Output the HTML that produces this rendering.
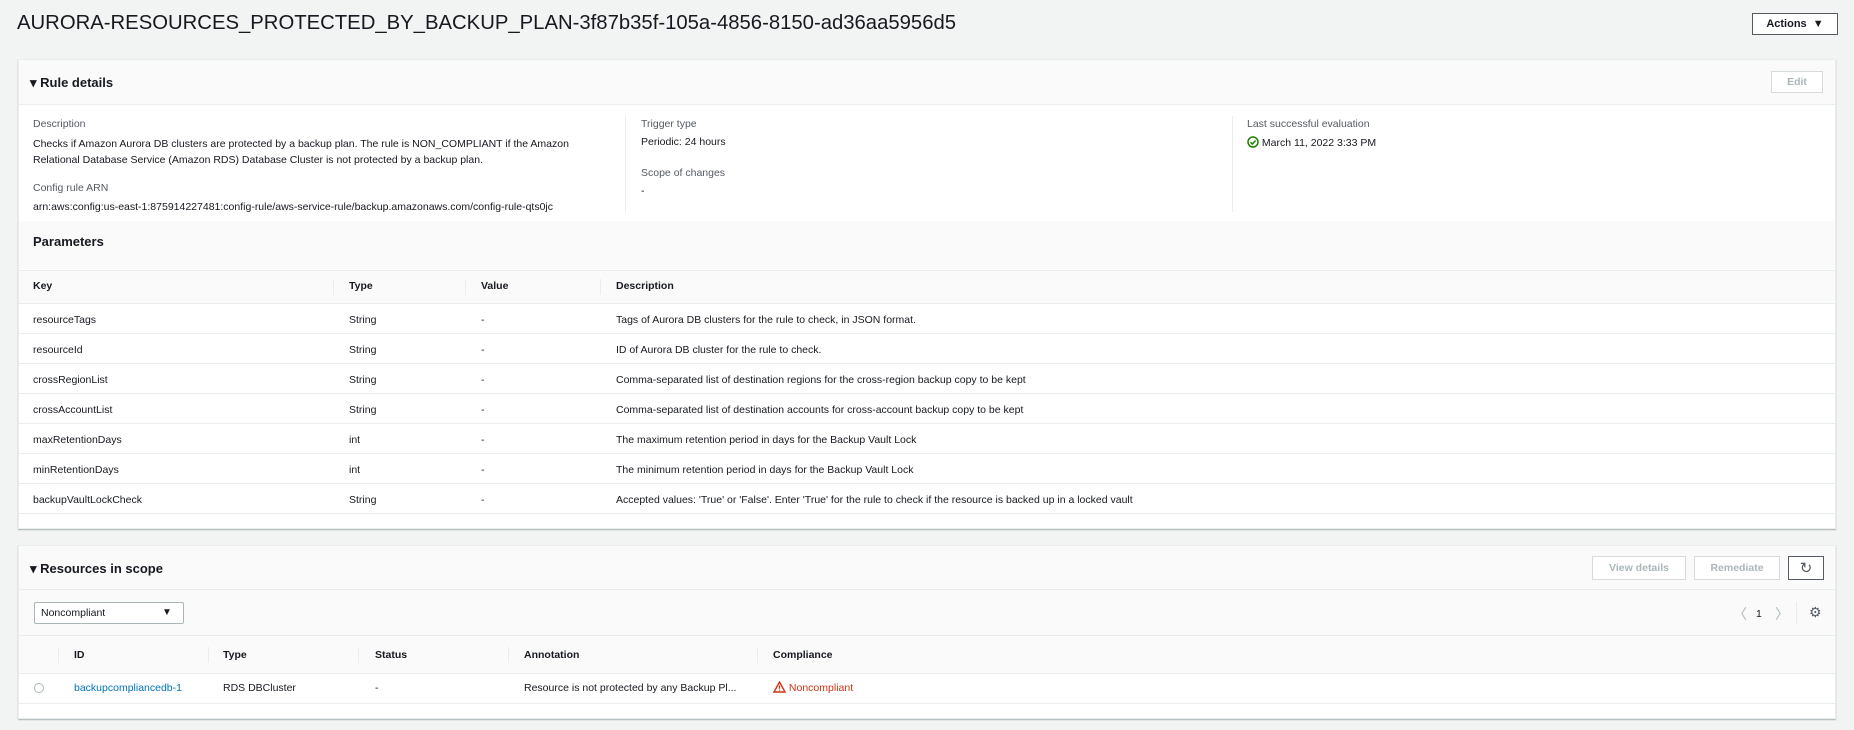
<!DOCTYPE html>
<html><head><meta charset="utf-8"><style>
*{box-sizing:border-box;margin:0;padding:0}
body{width:1854px;height:730px;background:#f2f3f3;font-family:"Liberation Sans",sans-serif;color:#16191f;font-size:12px;position:relative;overflow:hidden}
.a{position:absolute;white-space:nowrap}
.lbl{color:#545b64}
.box{position:absolute;left:18px;width:1818px;background:#fff;border:1px solid #eaeded;box-shadow:0 1px 1px rgba(0,28,36,.3)}
.hdr{position:absolute;left:0;right:0;background:#fafafa;border-bottom:1px solid #eaeded}
.btn{position:absolute;border:1px solid #d5dbdb;background:#fff;color:#aab7b8;font-weight:bold;font-size:12px;display:flex;align-items:center;justify-content:center}
.line{position:absolute;height:1px;background:#eaeded}
.vl{position:absolute;width:1px;background:#eaeded}
.t{font-size:10.5px}
</style></head><body>
<div class="a" style="left:17px;top:12px;font-size:20.3px;color:#16191f">AURORA-RESOURCES_PROTECTED_BY_BACKUP_PLAN-3f87b35f-105a-4856-8150-ad36aa5956d5</div>
<div class="btn" style="left:1752px;top:13px;width:86px;height:22px;border-color:#545b64;color:#16191f;font-size:11px">Actions&nbsp;&nbsp;▼</div>

<div class="box" style="top:59px;height:470px">
  <div class="hdr" style="top:0;height:45px"></div>
  <div class="a" style="left:11px;top:15px;font-size:13px;font-weight:bold">▾ Rule details</div>
  <div class="btn" style="left:1752px;top:11px;width:52px;height:22px;font-size:10.5px">Edit</div>
  <div class="a lbl t" style="left:14px;top:58px">Description</div>
  <div class="a t" style="left:14px;top:76px;line-height:16px">Checks if Amazon Aurora DB clusters are protected by a backup plan. The rule is NON_COMPLIANT if the Amazon<br>Relational Database Service (Amazon RDS) Database Cluster is not protected by a backup plan.</div>
  <div class="a lbl t" style="left:14px;top:122px">Config rule ARN</div>
  <div class="a t" style="left:14px;top:141px">arn:aws:config:us-east-1:875914227481:config-rule/aws-service-rule/backup.amazonaws.com/config-rule-qts0jc</div>
  <div class="vl" style="left:606px;top:56px;height:96px"></div>
  <div class="a lbl t" style="left:622px;top:58px">Trigger type</div>
  <div class="a t" style="left:622px;top:76px">Periodic: 24 hours</div>
  <div class="a lbl t" style="left:622px;top:107px">Scope of changes</div>
  <div class="a t" style="left:622px;top:125px">-</div>
  <div class="vl" style="left:1213px;top:56px;height:96px"></div>
  <div class="a lbl t" style="left:1228px;top:58px">Last successful evaluation</div>
  <div class="a t" style="left:1228px;top:76px"><svg width="12" height="12" viewBox="0 0 12 12" style="vertical-align:-2px"><circle cx="6" cy="6" r="5" fill="none" stroke="#1d8102" stroke-width="1.5"/><path d="M3.5 6.2l1.8 1.8 3.3-3.5" fill="none" stroke="#1d8102" stroke-width="1.5"/></svg> March 11, 2022 3:33 PM</div>
  <div class="hdr" style="top:161px;height:48px;border-bottom:none"></div>
  <div class="a" style="left:14px;top:174px;font-size:13px;font-weight:bold">Parameters</div>
  <div class="hdr" style="top:210px;height:34px;border-top:1px solid #eaeded"></div>
  <div class="a t" style="left:14px;top:220px;font-weight:bold">Key</div>
  <div class="a t" style="left:330px;top:220px;font-weight:bold">Type</div>
  <div class="a t" style="left:462px;top:220px;font-weight:bold">Value</div>
  <div class="a t" style="left:597px;top:220px;font-weight:bold">Description</div>
  <div class="vl" style="left:314px;top:219px;height:16px"></div>
  <div class="vl" style="left:446px;top:219px;height:16px"></div>
  <div class="vl" style="left:581px;top:219px;height:16px"></div>
  <div class="a t" style="left:14px;top:245px;line-height:30px">resourceTags<br>resourceId<br>crossRegionList<br>crossAccountList<br>maxRetentionDays<br>minRetentionDays<br>backupVaultLockCheck</div>
  <div class="a t" style="left:330px;top:245px;line-height:30px">String<br>String<br>String<br>String<br>int<br>int<br>String</div>
  <div class="a t" style="left:462px;top:245px;line-height:30px">-<br>-<br>-<br>-<br>-<br>-<br>-</div>
  <div class="a t" style="left:597px;top:245px;line-height:30px">Tags of Aurora DB clusters for the rule to check, in JSON format.<br>ID of Aurora DB cluster for the rule to check.<br>Comma-separated list of destination regions for the cross-region backup copy to be kept<br>Comma-separated list of destination accounts for cross-account backup copy to be kept<br>The maximum retention period in days for the Backup Vault Lock<br>The minimum retention period in days for the Backup Vault Lock<br>Accepted values: 'True' or 'False'. Enter 'True' for the rule to check if the resource is backed up in a locked vault</div>
  <div class="line" style="left:0;right:0;top:273px"></div>
  <div class="line" style="left:0;right:0;top:303px"></div>
  <div class="line" style="left:0;right:0;top:333px"></div>
  <div class="line" style="left:0;right:0;top:363px"></div>
  <div class="line" style="left:0;right:0;top:393px"></div>
  <div class="line" style="left:0;right:0;top:423px"></div>
  <div class="line" style="left:0;right:0;top:453px"></div>
</div>

<div class="box" style="top:545px;height:174px">
  <div class="hdr" style="top:0;height:44px"></div>
  <div class="a" style="left:11px;top:15px;font-size:13px;font-weight:bold">▾ Resources in scope</div>
  <div class="btn" style="left:1573px;top:10px;width:94px;height:24px;font-size:10.5px">View details</div>
  <div class="btn" style="left:1675px;top:10px;width:86px;height:24px;font-size:10.5px">Remediate</div>
  <div class="btn" style="left:1769px;top:10px;width:36px;height:24px;border-color:#545b64;color:#545b64;font-size:15px;font-weight:normal">↻</div>
  <div class="hdr" style="top:44px;height:46px"></div>
  <div style="position:absolute;left:15px;top:56px;width:150px;height:22px;border:1px solid #aab7b8;background:#fff;border-radius:2px"></div>
  <div class="a t" style="left:22px;top:61px">Noncompliant</div>
  <div class="a" style="left:143px;top:61px;font-size:10px">▼</div>
  <div class="a" style="left:1714px;top:58px;font-size:14px;color:#aab7b8">〈</div>
  <div class="a t" style="left:1737px;top:62px">1</div>
  <div class="a" style="left:1756px;top:58px;font-size:14px;color:#aab7b8">〉</div>
  <div class="vl" style="left:1777px;top:56px;height:22px"></div>
  <div class="a" style="left:1790px;top:58px;font-size:14px;color:#545b64">⚙</div>
  <div class="hdr" style="top:90px;height:38px"></div>
  <div class="vl" style="left:39px;top:101px;height:16px"></div>
  <div class="vl" style="left:189px;top:101px;height:16px"></div>
  <div class="vl" style="left:339px;top:101px;height:16px"></div>
  <div class="vl" style="left:489px;top:101px;height:16px"></div>
  <div class="vl" style="left:738px;top:101px;height:16px"></div>
  <div class="a t" style="left:55px;top:103px;font-weight:bold">ID</div>
  <div class="a t" style="left:204px;top:103px;font-weight:bold">Type</div>
  <div class="a t" style="left:356px;top:103px;font-weight:bold">Status</div>
  <div class="a t" style="left:505px;top:103px;font-weight:bold">Annotation</div>
  <div class="a t" style="left:754px;top:103px;font-weight:bold">Compliance</div>
  <div style="position:absolute;left:15px;top:137px;width:10px;height:10px;border:1px solid #aab7b8;border-radius:50%"></div>
  <div class="a t" style="left:55px;top:136px;color:#0073bb">backupcompliancedb-1</div>
  <div class="a t" style="left:204px;top:136px">RDS DBCluster</div>
  <div class="a t" style="left:356px;top:136px">-</div>
  <div class="a t" style="left:505px;top:136px">Resource is not protected by any Backup Pl...</div>
  <div class="a t" style="left:754px;top:135px;color:#d13212"><svg width="13" height="12" viewBox="0 0 13 12" style="vertical-align:-2px"><path d="M6.5 1L12 11H1Z" fill="none" stroke="#d13212" stroke-width="1.4"/><path d="M6.5 4.5v3.2M6.5 8.6v1" stroke="#d13212" stroke-width="1.3"/></svg> Noncompliant</div>
  <div class="line" style="left:0;right:0;top:157px"></div>
</div>
</body></html>
